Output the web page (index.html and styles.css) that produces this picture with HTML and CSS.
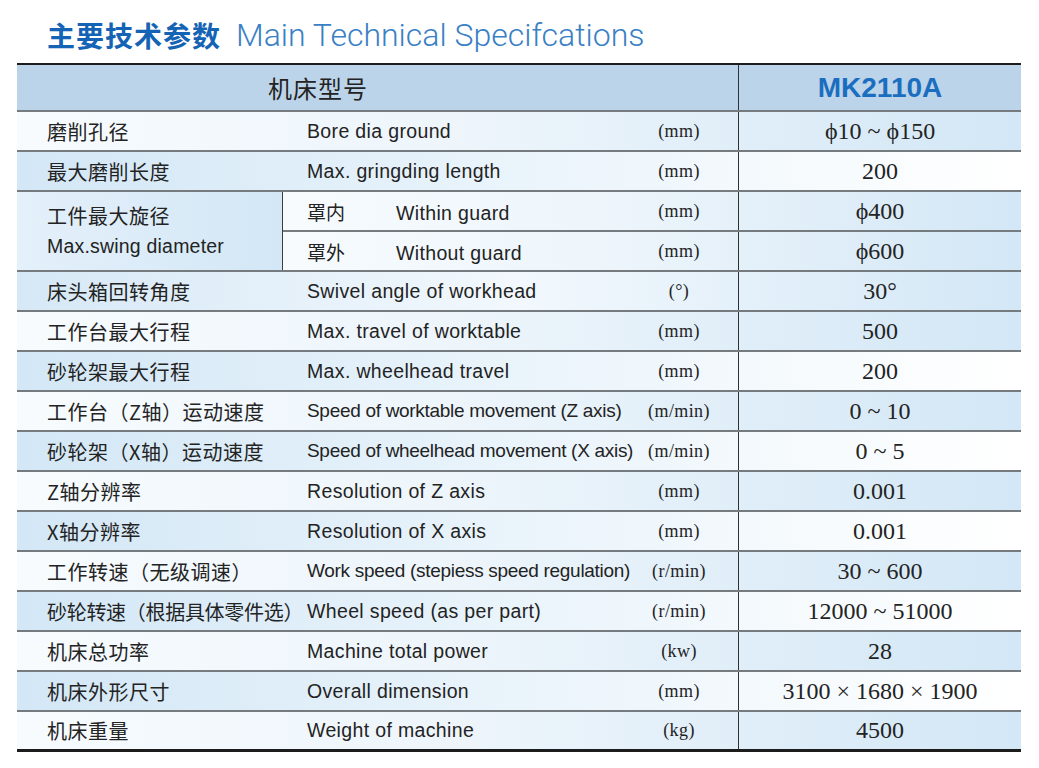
FILE: index.html
```html
<!DOCTYPE html>
<html lang="zh">
<head>
<meta charset="utf-8">
<title>主要技术参数 Main Technical Specifcations</title>
<link rel="stylesheet" href="styles.css">
</head>
<body>
<div class="page">
  <h1 class="title"><span class="title-cn">主要技术参数</span><span class="title-en">Main Technical Specifcations</span></h1>
  <div class="spec">
    <div class="row head"><div class="h-label">机床型号</div><div class="val h-model">MK2110A</div></div>
    <div class="row a"><div class="cn">磨削孔径</div><div class="en">Bore dia ground</div><div class="unit">(mm)</div><div class="val">ϕ10 ~ ϕ150</div></div>
    <div class="row b"><div class="cn">最大磨削长度</div><div class="en">Max. gringding length</div><div class="unit">(mm)</div><div class="val">200</div></div>
    <div class="group">
      <div class="g-label"><div class="g-cn">工件最大旋径</div><div class="g-en">Max.swing diameter</div></div>
      <div class="g-rows">
        <div class="sub a first"><div class="en"><span class="cn-s">罩内</span>Within guard</div><div class="unit">(mm)</div><div class="val">ϕ400</div></div>
        <div class="sub a"><div class="en"><span class="cn-s">罩外</span>Without guard</div><div class="unit">(mm)</div><div class="val">ϕ600</div></div>
      </div>
    </div>
    <div class="row c"><div class="cn">床头箱回转角度</div><div class="en">Swivel angle of workhead</div><div class="unit">(°)</div><div class="val">30°</div></div>
    <div class="row a"><div class="cn">工作台最大行程</div><div class="en">Max. travel of worktable</div><div class="unit">(mm)</div><div class="val">500</div></div>
    <div class="row b"><div class="cn">砂轮架最大行程</div><div class="en">Max. wheelhead travel</div><div class="unit">(mm)</div><div class="val">200</div></div>
    <div class="row a"><div class="cn">工作台（Z轴）运动速度</div><div class="en tight">Speed of worktable movement (Z axis)</div><div class="unit">(m/min)</div><div class="val">0 ~ 10</div></div>
    <div class="row b"><div class="cn">砂轮架（X轴）运动速度</div><div class="en tight">Speed of wheelhead movement (X axis)</div><div class="unit">(m/min)</div><div class="val">0 ~ 5</div></div>
    <div class="row a"><div class="cn">Z轴分辨率</div><div class="en">Resolution of Z axis</div><div class="unit">(mm)</div><div class="val">0.001</div></div>
    <div class="row b"><div class="cn">X轴分辨率</div><div class="en">Resolution of X axis</div><div class="unit">(mm)</div><div class="val">0.001</div></div>
    <div class="row a"><div class="cn">工作转速（无级调速）</div><div class="en tight">Work speed (stepiess speed regulation)</div><div class="unit">(r/min)</div><div class="val">30 ~ 600</div></div>
    <div class="row b"><div class="cn cn-tight">砂轮转速（根据具体零件选）</div><div class="en">Wheel speed (as per part)</div><div class="unit">(r/min)</div><div class="val">12000 ~ 51000</div></div>
    <div class="row a"><div class="cn">机床总功率</div><div class="en">Machine total power</div><div class="unit">(kw)</div><div class="val">28</div></div>
    <div class="row b"><div class="cn">机床外形尺寸</div><div class="en">Overall dimension</div><div class="unit">(mm)</div><div class="val">3100 × 1680 × 1900</div></div>
    <div class="row a last"><div class="cn">机床重量</div><div class="en">Weight of machine</div><div class="unit">(kg)</div><div class="val">4500</div></div>
  </div>
</div>
</body>
</html>
```
FILE: styles.css
```css
html, body {
  margin: 0;
  padding: 0;
  background: #ffffff;
}
body {
  font-family: "Liberation Sans", Arial, sans-serif;
  color: #232323;
}
.page {
  width: 1039px;
}
.title {
  margin: 0;
  height: 57px;
  padding: 6px 0 0 47px;
  display: flex;
  align-items: center;
  gap: 15px;
  font-weight: normal;
}
.title-cn {
  font-family: "Noto Sans CJK SC", sans-serif;
  font-weight: 700;
  font-size: 28px;
  letter-spacing: 1px;
  color: #1463b5;
}
.title-en {
  font-family: Roboto, "Liberation Sans", sans-serif;
  font-weight: 300;
  font-size: 32px;
  color: #3a80c5;
}
.spec {
  margin-left: 17px;
  width: 1004px;
}
.row {
  display: grid;
  grid-template-columns: 266px 361px 94px 283px;
  height: 38px;
  border-bottom: 2px solid #767b80;
  align-items: center;
}
.sub {
  display: grid;
  grid-template-columns: 361px 94px 283px;
  height: 38px;
  align-items: center;
}
.sub.first {
  border-bottom: 2px solid #767b80;
}
.a {
  background: linear-gradient(to right, #f7fbfe 0%, #edf5fb 45%, #d3e7f6 100%);
}
.b {
  background: linear-gradient(to right, #d3e7f6 0%, #eaf4fb 50%, #ffffff 100%);
}
.c {
  background: linear-gradient(to right, #d6e8f6 0%, #f2f8fd 50%, #d3e7f6 100%);
}
.cn {
  padding-left: 30px;
  font-family: "Noto Sans CJK SC", sans-serif;
  font-size: 20px;
  letter-spacing: 0.5px;
  white-space: nowrap;
}
.cn.cn-tight {
  letter-spacing: -0.3px;
}
.en {
  padding-left: 24px;
  font-size: 19.5px;
  letter-spacing: 0.35px;
  white-space: nowrap;
}
.en.tight {
  font-size: 19px;
  letter-spacing: -0.3px;
}
.cn-s {
  display: inline-block;
  width: 89px;
  font-family: "Noto Sans CJK SC", sans-serif;
  font-size: 19px;
  letter-spacing: 0;
}
.unit {
  padding-right: 24px;
  text-align: center;
  font-family: "Liberation Serif", "Times New Roman", serif;
  font-size: 18px;
  letter-spacing: 0.4px;
  white-space: nowrap;
}
.val {
  align-self: stretch;
  display: flex;
  align-items: center;
  justify-content: center;
  border-left: 1px solid #2f3134;
  font-family: "Liberation Serif", "Times New Roman", serif;
  font-size: 24px;
  white-space: nowrap;
}
.row.head {
  grid-template-columns: 721px 283px;
  height: 45px;
  border-top: 2px solid #1c1c1c;
  background: #bcd4e9;
}
.h-label {
  padding-left: 251px;
  font-family: "Noto Sans CJK SC", sans-serif;
  font-size: 24px;
  letter-spacing: 1px;
}
.val.h-model {
  font-family: "Liberation Sans", Arial, sans-serif;
  font-weight: 700;
  font-size: 28px;
  color: #1b6ebf;
}
.row.last {
  height: 37px;
  border-bottom: 3px solid #1c1c1c;
}
.group {
  display: flex;
  border-bottom: 2px solid #767b80;
}
.g-label {
  box-sizing: border-box;
  width: 266px;
  height: 78px;
  padding-left: 30px;
  border-right: 1px solid #3a3c3f;
  display: flex;
  flex-direction: column;
  justify-content: center;
  background: linear-gradient(to right, #e4f0fa 0%, #d3e7f6 100%);
}
.g-cn {
  line-height: 30px;
  font-family: "Noto Sans CJK SC", sans-serif;
  font-size: 20px;
  letter-spacing: 0.5px;
}
.g-en {
  line-height: 30px;
  font-size: 19.5px;
  letter-spacing: 0.2px;
}
.g-rows {
  width: 738px;
}
```
